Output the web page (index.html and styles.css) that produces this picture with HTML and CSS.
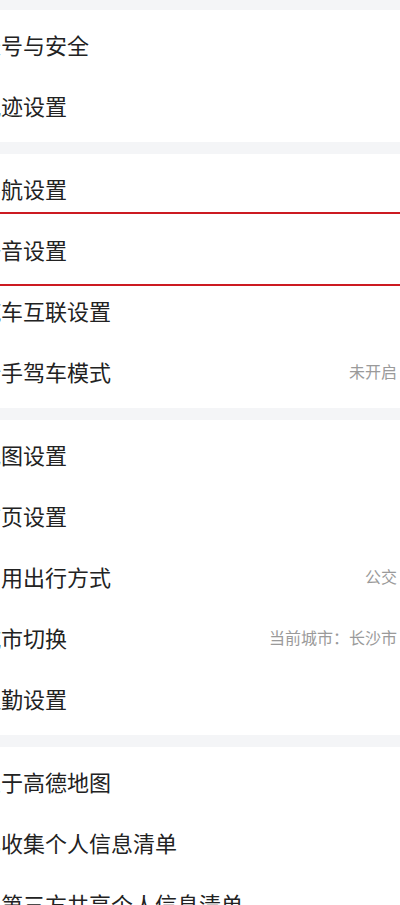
FILE: index.html
```html
<!DOCTYPE html>
<html lang="zh-CN">
<head>
    <meta charset="UTF-8">
    <meta name="viewport" content="width=device-width, initial-scale=1.0">
    <title>设置</title>
    <link rel="stylesheet" href="styles.css">
</head>
<body>

    <div class="settings">
        <div class="group">
            <div class="row"><span class="label">账号与安全</span></div>
            <div class="row"><span class="label">轨迹设置</span></div>
        </div>

        <div class="group">
            <div class="row"><span class="label">导航设置</span></div>
            <div class="row marked"><span class="label">语音设置</span></div>
            <div class="row"><span class="label">汽车互联设置</span></div>
            <div class="row"><span class="label">新手驾车模式</span><span class="value">未开启</span></div>
        </div>

        <div class="group">
            <div class="row"><span class="label">地图设置</span></div>
            <div class="row"><span class="label">首页设置</span></div>
            <div class="row"><span class="label">常用出行方式</span><span class="value">公交</span></div>
            <div class="row"><span class="label">城市切换</span><span class="value">当前城市：长沙市</span></div>
            <div class="row"><span class="label">通勤设置</span></div>
        </div>

        <div class="group">
            <div class="row"><span class="label">关于高德地图</span></div>
            <div class="row"><span class="label">已收集个人信息清单</span></div>
            <div class="row"><span class="label">与第三方共享个人信息清单</span></div>
        </div>
    </div>

</body>
</html>
```

FILE: styles.css
```css
body {
    margin: 0;
    background-color: #f4f5f7;
    font-family: "Noto Sans CJK SC", "Noto Sans", sans-serif;
    color: #222222;
    overflow-x: hidden;
}
.settings {
    display: flex;
    flex-direction: column;
    gap: 12px;
    padding-top: 10px;
}
.group {
    background-color: white;
    padding: 5px 0;
}
.row {
    position: relative;
    display: flex;
    align-items: center;
    justify-content: space-between;
    box-sizing: border-box;
    height: 61px;
    padding: 0 3px 3px 0;
}
.label {
    margin-left: -21px;
    font-size: 22px;
    white-space: nowrap;
}
.value {
    font-size: 16px;
    color: #9a9a9a;
    white-space: nowrap;
}
/* red highlight drawn over the voice row */
.marked::after {
    content: "";
    position: absolute;
    left: -10px;
    right: -10px;
    top: -8px;
    bottom: -5px;
    border-top: 2px solid #cc1a21;
    border-bottom: 2px solid #cc1a21;
}
```
